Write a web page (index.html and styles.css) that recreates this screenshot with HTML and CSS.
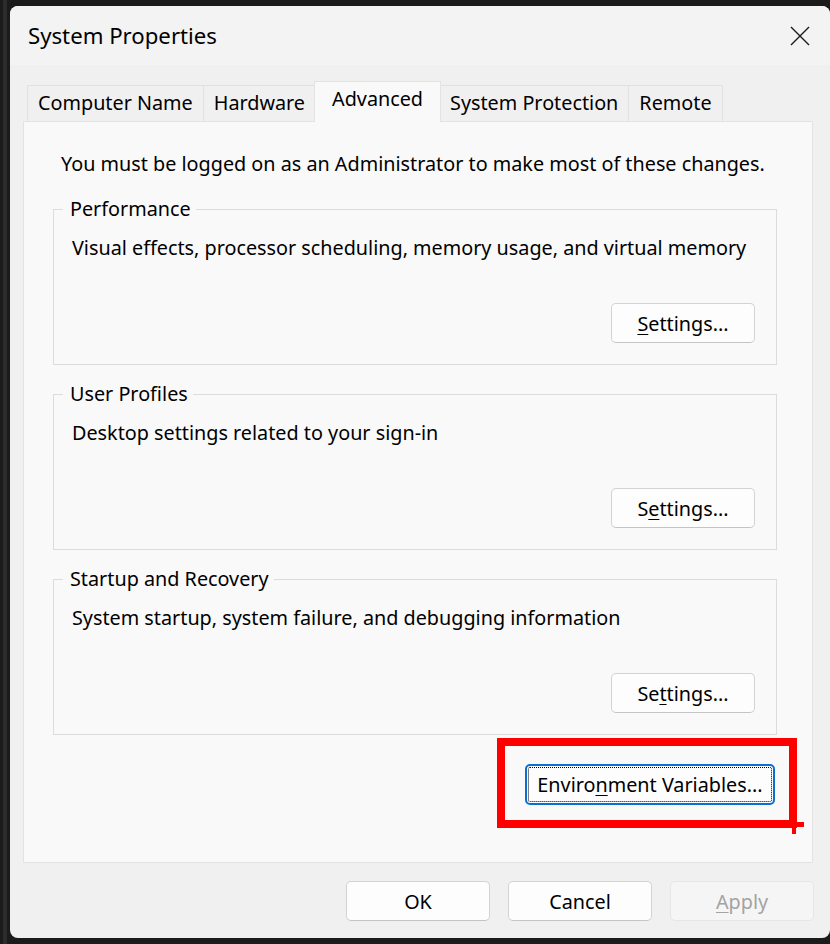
FILE: index.html
```html
<!DOCTYPE html>
<html lang="en">
<head>
    <meta charset="UTF-8"/>
    <title>System Properties</title>
    <link rel="stylesheet" href="styles.css">
</head>
<body>
    <div class="window">
        <div class="titlebar">
            <span class="title">System Properties</span>
            <svg class="close" width="20" height="20" viewBox="0 0 20 20">
                <path d="M1 1 L19 19 M19 1 L1 19" stroke="#1a1a1a" stroke-width="1.4" fill="none"/>
            </svg>
        </div>

        <div class="tabs">
            <div class="tab">Computer Name</div>
            <div class="tab">Hardware</div>
            <div class="tab active">Advanced</div>
            <div class="tab">System Protection</div>
            <div class="tab">Remote</div>
        </div>

        <div class="panel">
            <p class="notice">You must be logged on as an Administrator to make most of these changes.</p>

            <fieldset class="group">
                <legend>Performance</legend>
                <p class="desc">Visual effects, processor scheduling, memory usage, and virtual memory</p>
                <div class="group_actions"><button class="btn"><u>S</u>ettings...</button></div>
            </fieldset>

            <fieldset class="group">
                <legend>User Profiles</legend>
                <p class="desc">Desktop settings related to your sign-in</p>
                <div class="group_actions"><button class="btn">S<u>e</u>ttings...</button></div>
            </fieldset>

            <fieldset class="group">
                <legend>Startup and Recovery</legend>
                <p class="desc">System startup, system failure, and debugging information</p>
                <div class="group_actions"><button class="btn">Se<u>t</u>tings...</button></div>
            </fieldset>

            <div class="env_row">
                <button class="btn btn_env">Enviro<u>n</u>ment Variables...</button>
            </div>
        </div>

        <div class="footer">
            <button class="btn">OK</button>
            <button class="btn">Cancel</button>
            <button class="btn" disabled><u>A</u>pply</button>
        </div>

        <!-- annotation drawn over the dialog -->
        <svg class="highlight" width="320" height="104" viewBox="0 0 320 104">
            <rect x="4" y="4" width="292" height="82" fill="none" stroke="#ff0000" stroke-width="8"/>
            <rect x="296" y="84" width="11" height="5" fill="#ff0000"/>
            <rect x="295" y="86" width="4" height="10" fill="#ff0000"/>
        </svg>
    </div>
</body>
</html>
```

FILE: styles.css
```css
html, body {
    margin: 0;
    height: 944px;
    overflow: hidden;
}

body {
    background: linear-gradient(to right, #1b1b1b 0, #1b1b1b 3px, #2c2c2c 3px, #2c2c2c 7px, #1b1b1b 7px);
    font-family: "Noto Sans", "Open Sans", sans-serif;
    font-size: 19.8px;
    color: #000;
    padding-top: 6px;
    box-sizing: border-box;
}

.window {
    position: relative;
    width: 820px;
    height: 932px;
    margin-left: 10px;
    border-radius: 8px;
    background: #f0f0f0;
    overflow: hidden;
}

/* title bar */
.titlebar {
    height: 59px;
    background: #f3f3f3;
    display: flex;
    align-items: center;
    justify-content: space-between;
    padding: 0 20px 0 18px;
}

.title {
    font-size: 22.2px;
}

.close {
    display: block;
}

/* tabs */
.tabs {
    display: flex;
    align-items: flex-end;
    margin: 16px 0 0 17px;
}

.tab {
    box-sizing: border-box;
    height: 36px;
    line-height: 34px;
    padding: 0 10px;
    border: 1px solid #e1e1e1;
    border-bottom: none;
    background: #f0f0f0;
    margin-left: -1px;
    white-space: nowrap;
}

.tab:first-child {
    margin-left: 0;
}

.tab.active {
    position: relative;
    z-index: 1;
    height: 41px;
    padding: 0 17px 5px;
    margin: 0 -1px -1px -2px;
    background: #f9f9f9;
    border-color: #e3e3e3;
}

/* tab page */
.panel {
    box-sizing: border-box;
    height: 742px;
    margin: 0 17px 0 13px;
    padding: 28px 35px 0 29px;
    border: 1px solid #e3e3e3;
    background: #f9f9f9;
}

.notice {
    margin: 0 0 17px 8px;
    line-height: 28px;
    white-space: nowrap;
}

.group {
    margin: 0 0 15px 0;
    padding: 11px 21px 21px 18px;
    border: 1px solid #dcdcdc;
    min-width: 0;
}

.group legend {
    margin-left: -9px;
    padding: 0 5px 0 7px;
    line-height: 28px;
}

.desc {
    margin: 0;
    line-height: 28px;
    white-space: nowrap;
}

.group_actions {
    display: flex;
    justify-content: flex-end;
    margin-top: 41px;
}

/* buttons */
.btn {
    box-sizing: border-box;
    width: 144px;
    height: 40px;
    padding: 0;
    font: inherit;
    color: #000;
    background: #fdfdfd;
    border: 1px solid #d3d3d3;
    border-bottom-color: #c4c4c4;
    border-radius: 5px;
}

.btn u {
    text-underline-offset: 3px;
}

.btn[disabled] {
    color: #a3a3a3;
    background: #f5f5f5;
    border-color: #e6e6e6;
}

.env_row {
    display: flex;
    justify-content: flex-end;
    margin: 29px 2px 0 0;
}

.btn_env {
    width: 250px;
    height: 41px;
    border: 2px solid #0a6fd0;
    outline: 1px dotted #000;
    outline-offset: -4px;
}

.footer {
    display: flex;
    justify-content: flex-end;
    gap: 18px;
    margin-top: 18px;
    padding-right: 16px;
}

.highlight {
    position: absolute;
    left: 487px;
    top: 732px;
}
```
